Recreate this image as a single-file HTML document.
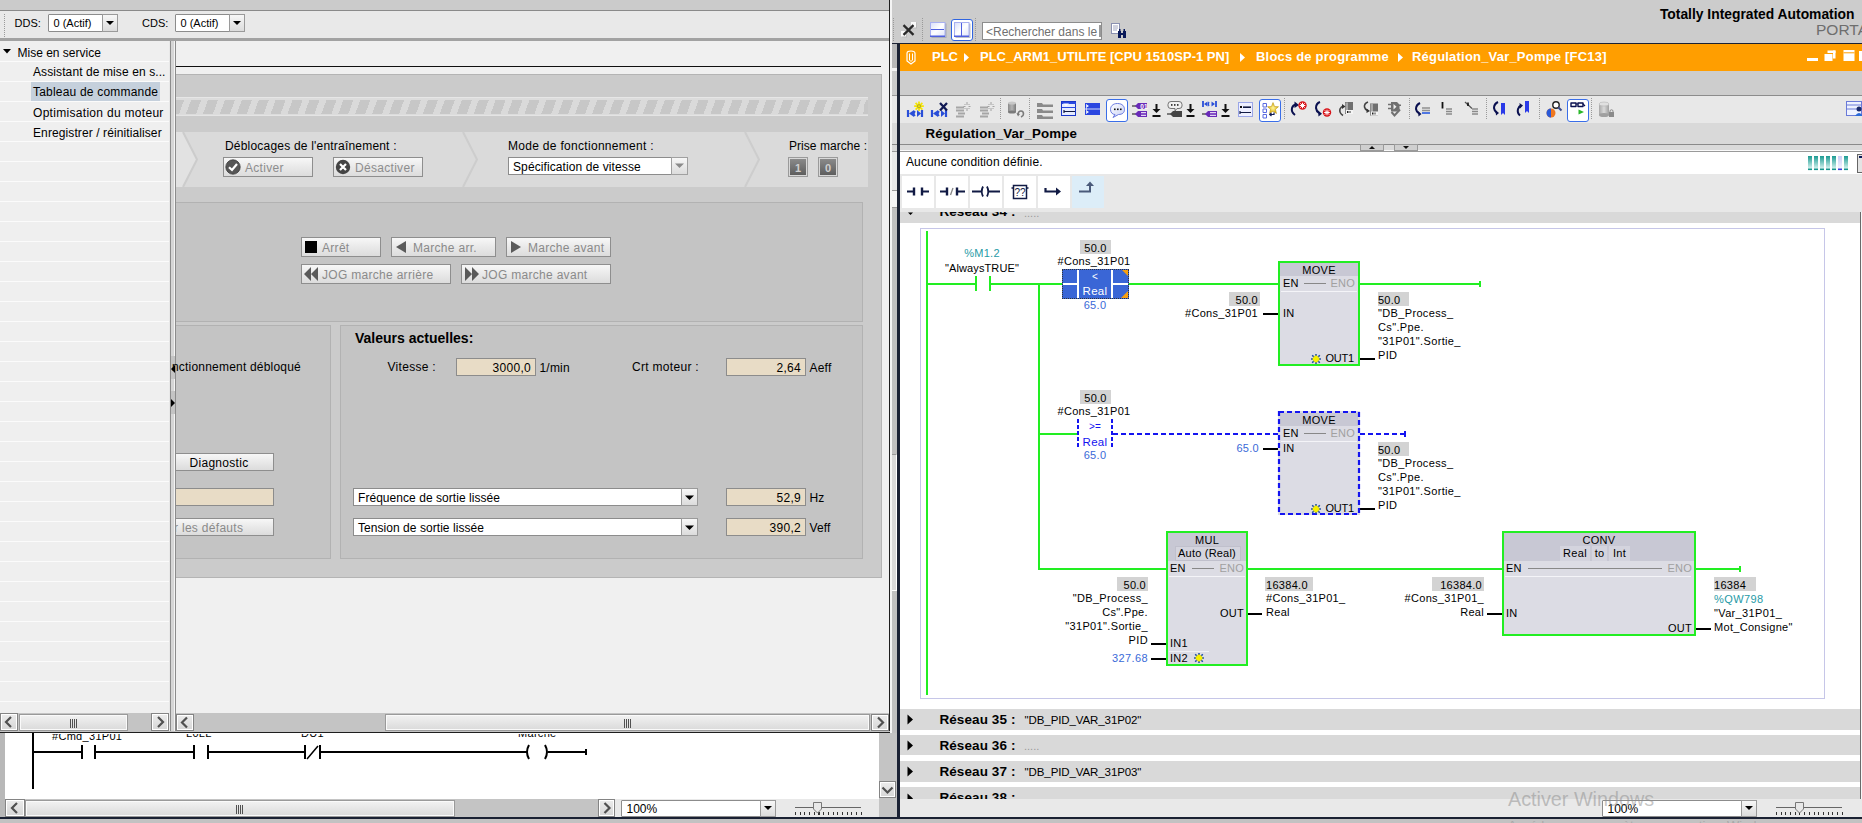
<!DOCTYPE html><html><head><meta charset="utf-8"><style>
html,body{margin:0;padding:0;}
body{width:1862px;height:823px;overflow:hidden;position:relative;background:#c4c4c4;font-family:"Liberation Sans", sans-serif;}
body div, body svg{position:absolute;} svg{overflow:visible;}
.btn{background:linear-gradient(#f7f7f7,#e9e9e9 50%,#dcdcdc);border:1px solid #8e8e8e;box-sizing:border-box;}
</style></head><body>
<div style="left:0px;top:0px;width:889px;height:10px;background:#cbcbcb;"></div>
<div style="left:0px;top:10px;width:889px;height:1px;background:#8a8a8a;"></div>
<div style="left:0px;top:11px;width:890px;height:27px;background:#e9e9e9;"></div>
<div style="left:4px;top:14px;width:1px;height:23px;background:repeating-linear-gradient(#9a9a9a 0 1px,transparent 1px 2px);"></div>
<div style="left:0px;top:38px;width:890px;height:3px;background:#a2a2a2;"></div>
<div style="top:17.49px;font-size:11px;line-height:13px;font-weight:400;color:#000;white-space:pre;left:14.5px;">DDS:</div>
<div style="left:48px;top:14px;width:70px;height:18px;background:#fff;border:1px solid #8c8c8c;box-sizing:border-box;border-radius:1px;"></div>
<div class="btn" style="left:102px;top:14px;width:16px;height:18px;border-color:#9a9a9a;"></div>
<svg style="left:105px;top:20px;" width="10" height="6" viewBox="0 0 10 6"><path d="M1 1 L9 1 L5 5 Z" fill="#000"/></svg>
<div style="top:17.49px;font-size:11px;line-height:13px;font-weight:400;color:#000;white-space:pre;left:53.5px;">0 (Actif)</div>
<div style="top:17.49px;font-size:11px;line-height:13px;font-weight:400;color:#000;white-space:pre;left:142px;">CDS:</div>
<div style="left:175px;top:14px;width:70px;height:18px;background:#fff;border:1px solid #8c8c8c;box-sizing:border-box;border-radius:1px;"></div>
<div class="btn" style="left:229px;top:14px;width:16px;height:18px;border-color:#9a9a9a;"></div>
<svg style="left:232px;top:20px;" width="10" height="6" viewBox="0 0 10 6"><path d="M1 1 L9 1 L5 5 Z" fill="#000"/></svg>
<div style="top:17.49px;font-size:11px;line-height:13px;font-weight:400;color:#000;white-space:pre;left:180.5px;">0 (Actif)</div>
<div style="left:0px;top:41px;width:169px;height:672px;background:#efefef;"></div>
<div style="left:0px;top:61px;width:169px;height:1px;background:#fbfbfb;"></div>
<div style="left:0px;top:81px;width:169px;height:1px;background:#fbfbfb;"></div>
<div style="left:0px;top:101px;width:169px;height:1px;background:#fbfbfb;"></div>
<div style="left:0px;top:121px;width:169px;height:1px;background:#fbfbfb;"></div>
<div style="left:0px;top:141px;width:169px;height:1px;background:#fbfbfb;"></div>
<div style="left:0px;top:161px;width:169px;height:1px;background:#fbfbfb;"></div>
<div style="left:0px;top:181px;width:169px;height:1px;background:#fbfbfb;"></div>
<div style="left:0px;top:201px;width:169px;height:1px;background:#fbfbfb;"></div>
<div style="left:0px;top:221px;width:169px;height:1px;background:#fbfbfb;"></div>
<div style="left:0px;top:241px;width:169px;height:1px;background:#fbfbfb;"></div>
<div style="left:0px;top:261px;width:169px;height:1px;background:#fbfbfb;"></div>
<div style="left:0px;top:281px;width:169px;height:1px;background:#fbfbfb;"></div>
<div style="left:0px;top:301px;width:169px;height:1px;background:#fbfbfb;"></div>
<div style="left:0px;top:321px;width:169px;height:1px;background:#fbfbfb;"></div>
<div style="left:0px;top:341px;width:169px;height:1px;background:#fbfbfb;"></div>
<div style="left:0px;top:361px;width:169px;height:1px;background:#fbfbfb;"></div>
<div style="left:0px;top:381px;width:169px;height:1px;background:#fbfbfb;"></div>
<div style="left:0px;top:401px;width:169px;height:1px;background:#fbfbfb;"></div>
<div style="left:0px;top:421px;width:169px;height:1px;background:#fbfbfb;"></div>
<div style="left:0px;top:441px;width:169px;height:1px;background:#fbfbfb;"></div>
<div style="left:0px;top:461px;width:169px;height:1px;background:#fbfbfb;"></div>
<div style="left:0px;top:481px;width:169px;height:1px;background:#fbfbfb;"></div>
<div style="left:0px;top:501px;width:169px;height:1px;background:#fbfbfb;"></div>
<div style="left:0px;top:521px;width:169px;height:1px;background:#fbfbfb;"></div>
<div style="left:0px;top:541px;width:169px;height:1px;background:#fbfbfb;"></div>
<div style="left:0px;top:561px;width:169px;height:1px;background:#fbfbfb;"></div>
<div style="left:0px;top:581px;width:169px;height:1px;background:#fbfbfb;"></div>
<div style="left:0px;top:601px;width:169px;height:1px;background:#fbfbfb;"></div>
<div style="left:0px;top:621px;width:169px;height:1px;background:#fbfbfb;"></div>
<div style="left:0px;top:641px;width:169px;height:1px;background:#fbfbfb;"></div>
<div style="left:0px;top:661px;width:169px;height:1px;background:#fbfbfb;"></div>
<div style="left:0px;top:681px;width:169px;height:1px;background:#fbfbfb;"></div>
<div style="left:0px;top:701px;width:169px;height:1px;background:#fbfbfb;"></div>
<svg style="left:3px;top:49px;" width="9" height="5" viewBox="0 0 9 5"><path d="M0 0 L8 0 L4 4.5 Z" fill="#000"/></svg>
<div style="top:45.64px;font-size:12px;line-height:14px;font-weight:400;color:#000;white-space:pre;left:17.5px;">Mise en service</div>
<div style="top:65.44px;font-size:12px;line-height:14px;font-weight:400;color:#000;white-space:pre;letter-spacing:0.1px;left:33px;">Assistant de mise en s...</div>
<div style="left:31px;top:82px;width:129px;height:19px;background:#c5d0dc;"></div>
<div style="top:85.44px;font-size:12px;line-height:14px;font-weight:400;color:#000;white-space:pre;letter-spacing:0.2px;left:33px;">Tableau de commande</div>
<div style="top:105.64px;font-size:12px;line-height:14px;font-weight:400;color:#000;white-space:pre;letter-spacing:0.3px;left:33px;">Optimisation du moteur</div>
<div style="top:125.64px;font-size:12px;line-height:14px;font-weight:400;color:#000;white-space:pre;letter-spacing:0.1px;left:33px;">Enregistrer / réinitialiser</div>
<div style="left:0px;top:713px;width:169px;height:18px;background:#c4c4c4;"></div>
<div style="left:0px;top:713px;width:18px;height:18px;box-sizing:border-box;border:1px solid #848484;background:linear-gradient(#ececec,#d6d6d6);box-shadow:inset 0 0 0 1px #fff;"></div>
<svg style="left:0;top:0" width="1862" height="823"><path d="M11.0 717.0 L6.0 722.0 L11.0 727.0" stroke="#505050" stroke-width="2.2" fill="none"/></svg>
<div style="left:19px;top:714px;width:109px;height:17px;box-sizing:border-box;border:1px solid #9a9a9a;background:linear-gradient(#f2f2f2,#dadada);box-shadow:inset 0 0 0 1px #fafafa;"></div>
<div style="left:69.5px;top:718.5px;width:8px;height:9px;background:repeating-linear-gradient(90deg,#505050 0 1px,transparent 1px 2px);"></div>
<div style="left:151px;top:713px;width:18px;height:18px;box-sizing:border-box;border:1px solid #848484;background:linear-gradient(#ececec,#d6d6d6);box-shadow:inset 0 0 0 1px #fff;"></div>
<svg style="left:0;top:0" width="1862" height="823"><path d="M158.0 717.0 L163.0 722.0 L158.0 727.0" stroke="#505050" stroke-width="2.2" fill="none"/></svg>
<div style="left:169px;top:41px;width:1px;height:692px;background:#e8e8e8;"></div>
<div style="left:170px;top:41px;width:1px;height:692px;background:#8c8c8c;"></div>
<div style="left:171px;top:41px;width:3px;height:692px;background:#d6d6d6;"></div>
<div style="left:174px;top:41px;width:1px;height:692px;background:#f4f4f4;"></div>
<div style="left:175px;top:41px;width:1px;height:692px;background:#8c8c8c;"></div>
<div style="left:171px;top:356px;width:4px;height:23px;background:#c4c4c4;"></div>
<svg style="left:171px;top:365px;" width="4" height="8" viewBox="0 0 4 8"><path d="M4 0 L0 4 L4 8 Z" fill="#000"/></svg>
<div style="left:171px;top:391px;width:4px;height:23px;background:#c4c4c4;"></div>
<svg style="left:171px;top:399px;" width="4" height="8" viewBox="0 0 4 8"><path d="M0 0 L4 4 L0 8 Z" fill="#000"/></svg>
<div style="left:176px;top:41px;width:713px;height:672px;background:#f0f0f0;"></div>
<div style="left:176px;top:66px;width:705px;height:1px;background:#101010;"></div>
<div style="left:176px;top:74px;width:706px;height:504px;background:#cbcbcb;border:1px solid #b4b4b4;box-sizing:border-box;border-left:none;"></div>
<div style="left:176px;top:97px;width:692px;height:19px;background:#dcdcdc;"></div>
<div style="left:176px;top:97px;width:692px;height:1px;background:#e6e6e6;"></div>
<div style="left:176px;top:115px;width:692px;height:1px;background:#e4e4e4;"></div>
<div style="left:176px;top:99.5px;width:692px;height:14px;background-position:-4px 0;background:repeating-linear-gradient(110deg,#dadada 0 2px,#c7c7c7 2px 11.4px,#dadada 11.4px 15.9px) -4px 0;"></div>
<div style="left:176px;top:132px;width:692px;height:55px;background:#dadada;"></div>
<div style="left:176px;top:132px;width:8px;height:55px;background:#e2e2e2;"></div>
<svg style="left:176px;top:132px;" width="692" height="55" viewBox="0 0 692 55"><path d="M7 0 L21 27.5 L7 55" stroke="#cccccc" stroke-width="2" fill="#e2e2e2"/><path d="M287 0 L301 27.5 L287 55" stroke="#cdcdcd" stroke-width="2" fill="none"/><path d="M569 0 L583 27.5 L569 55" stroke="#cdcdcd" stroke-width="2" fill="none"/></svg>
<div style="top:139.44px;font-size:12px;line-height:14px;font-weight:400;color:#000;white-space:pre;letter-spacing:0.2px;left:225px;">Déblocages de l&#39;entraînement :</div>
<div class="btn" style="left:223px;top:157px;width:90px;height:20px;"></div>
<svg style="left:225px;top:159px;" width="16" height="16" viewBox="0 0 16 16"><circle cx="8" cy="8" r="7.2" fill="#555"/><circle cx="8" cy="8" r="7.2" fill="none" stroke="#3a3a3a" stroke-width="0.8"/><path d="M4 8.2 L7 11 L12 5" stroke="#fff" stroke-width="2.2" fill="none"/></svg>
<div style="top:161.14px;font-size:12px;line-height:14px;font-weight:400;color:#8d8d8d;white-space:pre;letter-spacing:0.3px;left:245px;">Activer</div>
<div class="btn" style="left:333px;top:157px;width:90px;height:20px;"></div>
<svg style="left:335px;top:159px;" width="16" height="16" viewBox="0 0 16 16"><circle cx="8" cy="8" r="7.2" fill="#444"/><path d="M5 5 L11 11 M11 5 L5 11" stroke="#fff" stroke-width="2.2"/></svg>
<div style="top:161.14px;font-size:12px;line-height:14px;font-weight:400;color:#8d8d8d;white-space:pre;letter-spacing:0.3px;left:355px;">Désactiver</div>
<div style="top:139.44px;font-size:12px;line-height:14px;font-weight:400;color:#000;white-space:pre;letter-spacing:0.3px;left:508px;">Mode de fonctionnement :</div>
<div style="left:508px;top:157px;width:180px;height:18px;background:#fff;border:1px solid #8c8c8c;box-sizing:border-box;"></div>
<div class="btn" style="left:671px;top:157px;width:17px;height:18px;border-color:#a0a0a0;"></div>
<svg style="left:674px;top:163px;" width="11" height="6" viewBox="0 0 11 6"><path d="M1 0.5 L10 0.5 L5.5 5 Z" fill="#8a8a8a"/></svg>
<div style="top:159.64px;font-size:12px;line-height:14px;font-weight:400;color:#000;white-space:pre;letter-spacing:0.1px;left:513px;">Spécification de vitesse</div>
<div style="top:139.44px;font-size:12px;line-height:14px;font-weight:400;color:#000;white-space:pre;letter-spacing:0.05px;left:789px;">Prise marche :</div>
<div style="left:788px;top:157px;width:20px;height:20px;background:#d8d8d8;border:1px solid #9a9a9a;box-sizing:border-box;"></div>
<div style="left:790px;top:159px;width:16px;height:16px;background:linear-gradient(#8a8a8a,#5e5e5e);"></div>
<div style="top:161.99px;font-size:11px;line-height:13px;font-weight:700;color:#cfcfcf;white-space:pre;left:498px;width:600px;text-align:center;">1</div>
<div style="left:818px;top:157px;width:20px;height:20px;background:#d8d8d8;border:1px solid #9a9a9a;box-sizing:border-box;"></div>
<div style="left:820px;top:159px;width:16px;height:16px;background:linear-gradient(#8a8a8a,#5e5e5e);"></div>
<div style="top:161.99px;font-size:11px;line-height:13px;font-weight:700;color:#cfcfcf;white-space:pre;left:528px;width:600px;text-align:center;">0</div>
<div style="left:176px;top:202px;width:687px;height:120px;background:#c4c4c4;border:1px solid #b2b2b2;box-sizing:border-box;border-left:none;"></div>
<div class="btn" style="left:301px;top:237px;width:80px;height:20px;"></div>
<div style="left:305px;top:241px;width:12px;height:12px;background:#000;"></div>
<div style="top:241.14px;font-size:12px;line-height:14px;font-weight:400;color:#8a8a8a;white-space:pre;letter-spacing:0.3px;left:322px;">Arrêt</div>
<div class="btn" style="left:391px;top:237px;width:105px;height:20px;"></div>
<svg style="left:394px;top:240px" width="14" height="14"><path d="M12 1 L2 7 L12 13 Z" fill="#5a5a5a"/></svg>
<div style="top:241.14px;font-size:12px;line-height:14px;font-weight:400;color:#8a8a8a;white-space:pre;letter-spacing:0.3px;left:413px;">Marche arr.</div>
<div class="btn" style="left:506px;top:237px;width:105px;height:20px;"></div>
<svg style="left:509px;top:240px" width="14" height="14"><path d="M2 1 L12 7 L2 13 Z" fill="#5a5a5a"/></svg>
<div style="top:241.14px;font-size:12px;line-height:14px;font-weight:400;color:#8a8a8a;white-space:pre;letter-spacing:0.3px;left:528px;">Marche avant</div>
<div class="btn" style="left:301px;top:264px;width:150px;height:20px;"></div>
<svg style="left:303px;top:266px" width="17" height="16"><path d="M8 1 L1 8 L8 15 Z M15 1 L8 8 L15 15 Z" fill="#5a5a5a"/></svg>
<div style="top:268.14px;font-size:12px;line-height:14px;font-weight:400;color:#8a8a8a;white-space:pre;letter-spacing:0.3px;left:322px;">JOG marche arrière</div>
<div class="btn" style="left:461px;top:264px;width:150px;height:20px;"></div>
<svg style="left:463px;top:266px" width="17" height="16"><path d="M2 1 L9 8 L2 15 Z M9 1 L16 8 L9 15 Z" fill="#5a5a5a"/></svg>
<div style="top:268.14px;font-size:12px;line-height:14px;font-weight:400;color:#8a8a8a;white-space:pre;letter-spacing:0.3px;left:482px;">JOG marche avant</div>
<div style="left:176px;top:325px;width:155px;height:234px;background:#c4c4c4;border:1px solid #b2b2b2;box-sizing:border-box;border-left:none;"></div>
<div style="left:340px;top:325px;width:523px;height:234px;background:#c4c4c4;border:1px solid #b2b2b2;box-sizing:border-box;"></div>
<div style="top:360.14px;font-size:12px;line-height:14px;font-weight:400;color:#000;white-space:pre;letter-spacing:0.2px;left:172px;">nctionnement débloqué</div>
<div class="btn" style="left:176px;top:453px;width:98px;height:18px;border-left:none;"></div>
<div style="top:455.64px;font-size:12px;line-height:14px;font-weight:400;color:#000;white-space:pre;letter-spacing:0.3px;left:-81px;width:600px;text-align:center;">Diagnostic</div>
<div style="left:176px;top:488px;width:98px;height:18px;background:#e8dcc6;border:1px solid #8c8c8c;box-sizing:border-box;border-left:none;"></div>
<div class="btn" style="left:176px;top:518px;width:98px;height:18px;border-left:none;"></div>
<div style="left:176px;top:518px;width:98px;height:18px;overflow:hidden;">
<div style="top:2.64px;font-size:12px;line-height:14px;font-weight:400;color:#8a8a8a;white-space:pre;letter-spacing:0.3px;left:-2px;">r les défauts</div>
</div>
<div style="top:330.15px;font-size:14px;line-height:17px;font-weight:700;color:#000;white-space:pre;left:355px;">Valeurs actuelles:</div>
<div style="top:360.14px;font-size:12px;line-height:14px;font-weight:400;color:#000;white-space:pre;letter-spacing:0.3px;left:-164px;width:600px;text-align:right;">Vitesse :</div>
<div style="left:456px;top:358px;width:80px;height:18px;background:#e8dcc6;border:1px solid #8c8c8c;box-sizing:border-box;"></div>
<div style="top:360.64px;font-size:12px;line-height:14px;font-weight:400;color:#000;white-space:pre;letter-spacing:0.3px;left:-69px;width:600px;text-align:right;">3000,0</div>
<div style="top:360.64px;font-size:12px;line-height:14px;font-weight:400;color:#000;white-space:pre;letter-spacing:0.2px;left:539.5px;">1/min</div>
<div style="top:360.14px;font-size:12px;line-height:14px;font-weight:400;color:#000;white-space:pre;letter-spacing:0.3px;left:99px;width:600px;text-align:right;">Crt moteur :</div>
<div style="left:726px;top:358px;width:80px;height:18px;background:#e8dcc6;border:1px solid #8c8c8c;box-sizing:border-box;"></div>
<div style="top:360.64px;font-size:12px;line-height:14px;font-weight:400;color:#000;white-space:pre;letter-spacing:0.3px;left:201px;width:600px;text-align:right;">2,64</div>
<div style="top:360.64px;font-size:12px;line-height:14px;font-weight:400;color:#000;white-space:pre;letter-spacing:0.2px;left:809.5px;">Aeff</div>
<div style="left:353px;top:488px;width:345px;height:18px;background:#fff;border:1px solid #8c8c8c;box-sizing:border-box;"></div>
<div class="btn" style="left:681px;top:488px;width:17px;height:18px;border-color:#9a9a9a;"></div>
<svg style="left:684px;top:495px;" width="11" height="6" viewBox="0 0 11 6"><path d="M1 0.5 L10 0.5 L5.5 5 Z" fill="#000"/></svg>
<div style="top:490.64px;font-size:12px;line-height:14px;font-weight:400;color:#000;white-space:pre;letter-spacing:0.05px;left:358px;">Fréquence de sortie lissée</div>
<div style="left:726px;top:488px;width:80px;height:18px;background:#e8dcc6;border:1px solid #8c8c8c;box-sizing:border-box;"></div>
<div style="top:490.64px;font-size:12px;line-height:14px;font-weight:400;color:#000;white-space:pre;letter-spacing:0.3px;left:201px;width:600px;text-align:right;">52,9</div>
<div style="top:490.64px;font-size:12px;line-height:14px;font-weight:400;color:#000;white-space:pre;letter-spacing:0.1px;left:809.5px;">Hz</div>
<div style="left:353px;top:518px;width:345px;height:18px;background:#fff;border:1px solid #8c8c8c;box-sizing:border-box;"></div>
<div class="btn" style="left:681px;top:518px;width:17px;height:18px;border-color:#9a9a9a;"></div>
<svg style="left:684px;top:525px;" width="11" height="6" viewBox="0 0 11 6"><path d="M1 0.5 L10 0.5 L5.5 5 Z" fill="#000"/></svg>
<div style="top:520.64px;font-size:12px;line-height:14px;font-weight:400;color:#000;white-space:pre;letter-spacing:0.05px;left:358px;">Tension de sortie lissée</div>
<div style="left:726px;top:518px;width:80px;height:18px;background:#e8dcc6;border:1px solid #8c8c8c;box-sizing:border-box;"></div>
<div style="top:520.64px;font-size:12px;line-height:14px;font-weight:400;color:#000;white-space:pre;letter-spacing:0.3px;left:201px;width:600px;text-align:right;">390,2</div>
<div style="top:520.64px;font-size:12px;line-height:14px;font-weight:400;color:#000;white-space:pre;letter-spacing:0.1px;left:809.5px;">Veff</div>
<div style="left:176px;top:713px;width:713px;height:18px;background:#c4c4c4;"></div>
<div style="left:176px;top:714px;width:18px;height:17px;box-sizing:border-box;border:1px solid #848484;background:linear-gradient(#ececec,#d6d6d6);box-shadow:inset 0 0 0 1px #fff;"></div>
<svg style="left:0;top:0" width="1862" height="823"><path d="M187.0 717.5 L182.0 722.5 L187.0 727.5" stroke="#505050" stroke-width="2.2" fill="none"/></svg>
<div style="left:385px;top:714px;width:485px;height:17px;box-sizing:border-box;border:1px solid #9a9a9a;background:linear-gradient(#f2f2f2,#dadada);box-shadow:inset 0 0 0 1px #fafafa;"></div>
<div style="left:623.5px;top:718.5px;width:8px;height:9px;background:repeating-linear-gradient(90deg,#505050 0 1px,transparent 1px 2px);"></div>
<div style="left:871px;top:714px;width:18px;height:17px;box-sizing:border-box;border:1px solid #848484;background:linear-gradient(#ececec,#d6d6d6);box-shadow:inset 0 0 0 1px #fff;"></div>
<svg style="left:0;top:0" width="1862" height="823"><path d="M878.0 717.5 L883.0 722.5 L878.0 727.5" stroke="#505050" stroke-width="2.2" fill="none"/></svg>
<div style="left:889px;top:0px;width:1px;height:733px;background:#1e1e1e;"></div>
<div style="left:890px;top:0px;width:2px;height:733px;background:#f4f4f4;"></div>
<div style="left:0px;top:731px;width:890px;height:1px;background:#c4c4c4;"></div>
<div style="left:0px;top:732px;width:890px;height:1px;background:#1e1e1e;"></div>
<div style="left:0px;top:733px;width:897px;height:84px;background:#ffffff;"></div>
<div style="left:0px;top:733px;width:5px;height:84px;background:#b8b8b8;"></div>
<div style="left:32px;top:733px;width:2px;height:56px;background:#000;"></div>
<svg style="left:0;top:733px" width="880" height="66"><path d="M34 19 H82 M96 19 H194 M208 19 H305 M321 19 H527" stroke="#000" stroke-width="2" fill="none"/><path d="M82 12 V26 M95 12 V26 M194 12 V26 M208 12 V26 M305 12 V26 M320 12 V26" stroke="#000" stroke-width="2" fill="none"/><path d="M307 26 L318 13" stroke="#000" stroke-width="1.5"/><path d="M529 12 Q525 19 529 26 M545 12 Q549 19 545 26" stroke="#000" stroke-width="2" fill="none"/><path d="M548 19 H586 M586 16 V22" stroke="#000" stroke-width="2" fill="none"/></svg>
<div style="left:0;top:734px;width:880px;height:20px;overflow:hidden;">
<div style="top:-4.01px;font-size:11px;line-height:13px;font-weight:400;color:#000;white-space:pre;letter-spacing:0.3px;left:52px;">#Cmd_31P01</div>
<div style="top:-7.01px;font-size:11px;line-height:13px;font-weight:400;color:#000;white-space:pre;letter-spacing:0.3px;left:186px;">L0LL</div>
<div style="top:-7.01px;font-size:11px;line-height:13px;font-weight:400;color:#000;white-space:pre;letter-spacing:0.3px;left:301px;">DU1</div>
<div style="top:-7.01px;font-size:11px;line-height:13px;font-weight:400;color:#000;white-space:pre;letter-spacing:0.3px;left:518px;">Marche</div>
</div>
<div style="left:879px;top:733px;width:18px;height:84px;background:#c4c4c4;"></div>
<div style="left:879px;top:781px;width:17px;height:17px;box-sizing:border-box;border:1px solid #848484;background:linear-gradient(#ececec,#d6d6d6);box-shadow:inset 0 0 0 1px #fff;"></div>
<svg style="left:0;top:0" width="1862" height="823"><path d="M882.5 787.5 L887.5 792.5 L892.5 787.5" stroke="#505050" stroke-width="2.2" fill="none"/></svg>
<div style="left:5px;top:799px;width:874px;height:18px;background:#c4c4c4;"></div>
<div style="left:5px;top:799px;width:20px;height:18px;box-sizing:border-box;border:1px solid #848484;background:linear-gradient(#ececec,#d6d6d6);box-shadow:inset 0 0 0 1px #fff;"></div>
<svg style="left:0;top:0" width="1862" height="823"><path d="M17.0 803.0 L12.0 808.0 L17.0 813.0" stroke="#505050" stroke-width="2.2" fill="none"/></svg>
<div style="left:25px;top:800px;width:430px;height:17px;box-sizing:border-box;border:1px solid #9a9a9a;background:linear-gradient(#f2f2f2,#dadada);box-shadow:inset 0 0 0 1px #fafafa;"></div>
<div style="left:236.0px;top:804.5px;width:8px;height:9px;background:repeating-linear-gradient(90deg,#505050 0 1px,transparent 1px 2px);"></div>
<div style="left:598px;top:799px;width:17px;height:18px;box-sizing:border-box;border:1px solid #848484;background:linear-gradient(#ececec,#d6d6d6);box-shadow:inset 0 0 0 1px #fff;"></div>
<svg style="left:0;top:0" width="1862" height="823"><path d="M604.5 803.0 L609.5 808.0 L604.5 813.0" stroke="#505050" stroke-width="2.2" fill="none"/></svg>
<div style="left:615px;top:799px;width:264px;height:18px;background:#e9e9e9;"></div>
<div style="left:621px;top:800px;width:155px;height:17px;background:#fff;border:1px solid #8c8c8c;box-sizing:border-box;border-radius:1px;"></div>
<div class="btn" style="left:760px;top:800px;width:16px;height:17px;border-color:#9a9a9a;"></div>
<svg style="left:763px;top:805px;" width="10" height="6" viewBox="0 0 10 6"><path d="M1 1 L9 1 L5 5 Z" fill="#000"/></svg>
<div style="top:802.14px;font-size:12px;line-height:14px;font-weight:400;color:#000;white-space:pre;left:626.5px;">100%</div>
<div style="left:795px;top:807px;width:66px;height:1px;background:#666;"></div>
<div style="left:795px;top:812px;width:67px;height:3px;background:repeating-linear-gradient(90deg,#333 0 1px,transparent 1px 4.7px);"></div>
<svg style="left:813px;top:802px;" width="9" height="12" viewBox="0 0 9 12"><path d="M0.5 0.5 H8.5 V7 L4.5 11 L0.5 7 Z" fill="#e8e8e8" stroke="#777"/></svg>
<div style="left:892px;top:0px;width:970px;height:43px;background:#cccccc;"></div>
<div style="left:892px;top:43px;width:970px;height:1px;background:#1a2133;"></div>
<div style="left:892px;top:44px;width:5px;height:689px;background:#c0c0c0;"></div>
<div style="left:892px;top:44px;width:5px;height:24px;background:#b8b8b8;"></div>
<div style="left:892px;top:68px;width:5px;height:3px;background:#f4f4f4;"></div>
<div style="left:892px;top:71px;width:5px;height:24px;background:#cbcbcb;"></div>
<div style="left:892px;top:95px;width:5px;height:1px;background:#999;"></div>
<div style="left:892px;top:96px;width:5px;height:27px;background:#e8e8e8;"></div>
<div style="left:892px;top:123px;width:5px;height:21px;background:#d9d9d9;"></div>
<div style="left:892px;top:144px;width:5px;height:1px;background:#888;"></div>
<div style="left:892px;top:145px;width:5px;height:6px;background:#d9d9d9;"></div>
<div style="left:892px;top:151px;width:5px;height:1px;background:#999;"></div>
<div style="left:892px;top:152px;width:5px;height:38px;background:#e8e8e8;"></div>
<div style="left:892px;top:190px;width:5px;height:1px;background:#999;"></div>
<div style="left:892px;top:191px;width:5px;height:16px;background:#f4f4f4;"></div>
<div style="left:892px;top:207px;width:5px;height:1px;background:#999;"></div>
<div style="left:892px;top:454px;width:5px;height:137px;background:#d8d8d8;border:1px solid #fff;box-sizing:border-box;border-left:none;border-top:1px solid #999;"></div>
<div style="left:897px;top:44px;width:3px;height:775px;background:#1a2133;"></div>
<div style="left:893px;top:18px;width:1px;height:23px;background:repeating-linear-gradient(#9a9a9a 0 1px,transparent 1px 2px);"></div>
<div style="left:922px;top:18px;width:1px;height:23px;background:repeating-linear-gradient(#9a9a9a 0 1px,transparent 1px 2px);"></div>
<div style="left:975px;top:18px;width:1px;height:23px;background:repeating-linear-gradient(#9a9a9a 0 1px,transparent 1px 2px);"></div>
<svg style="left:900px;top:20px;" width="20" height="20" viewBox="0 0 20 20"><rect x="12" y="2.5" width="5" height="6" fill="#aaa" opacity="0.5"/><rect x="11" y="2" width="5" height="5.5" fill="#fafafa"/><rect x="2" y="12" width="5" height="5.5" fill="#aaa" opacity="0.5"/><rect x="1" y="11" width="5" height="5.5" fill="#fafafa"/><path d="M3.5 5.2 L13.5 14.8 M13.5 5.2 L3.5 14.8" stroke="#2a2a2a" stroke-width="2.3"/></svg>
<svg style="left:930px;top:22px;" width="17" height="17" viewBox="0 0 17 17"><defs><linearGradient id="sg" x1="0" y1="0" x2="1" y2="1"><stop offset="0" stop-color="#d8def8"/><stop offset="0.5" stop-color="#ffffff"/><stop offset="1" stop-color="#dfe4fa"/></linearGradient></defs><rect x="1.5" y="1.5" width="15" height="14.5" fill="#9098a8" opacity="0.6"/><rect x="0.5" y="0.5" width="14.5" height="14" fill="url(#sg)" stroke="#a8b0f0" stroke-width="1"/><rect x="0" y="13.5" width="15" height="1.5" fill="#5060e0"/><path d="M1 7.5 H14" stroke="#5060e0" stroke-width="1"/></svg>
<div style="left:951px;top:19px;width:22px;height:22px;background:#ffffff;border:1.5px solid #2f64e0;box-sizing:border-box;border-radius:3px;"></div>
<svg style="left:954px;top:22px;" width="17" height="17" viewBox="0 0 17 17"><defs><linearGradient id="sg" x1="0" y1="0" x2="1" y2="1"><stop offset="0" stop-color="#d8def8"/><stop offset="0.5" stop-color="#ffffff"/><stop offset="1" stop-color="#dfe4fa"/></linearGradient></defs><rect x="1.5" y="1.5" width="15" height="14.5" fill="#9098a8" opacity="0.6"/><rect x="0.5" y="0.5" width="14.5" height="14" fill="url(#sg)" stroke="#a8b0f0" stroke-width="1"/><rect x="0" y="13.5" width="15" height="1.5" fill="#5060e0"/><path d="M7.5 1 V14" stroke="#5060e0" stroke-width="1"/></svg>
<div style="left:982px;top:22px;width:120px;height:18px;background:#fff;border:1px solid #8c8c8c;box-sizing:border-box;"></div>
<div style="top:24.64px;font-size:12px;line-height:14px;font-weight:400;color:#707070;white-space:pre;left:986px;">&lt;Rechercher dans le</div>
<div style="left:1099px;top:25px;width:2px;height:12px;background:#999;"></div>
<svg style="left:1110px;top:22px;" width="18" height="17" viewBox="0 0 18 17"><rect x="1.5" y="1.5" width="8" height="10" fill="#fff" stroke="#8a90b0"/><path d="M3 4H8M3 6H8M3 8H7" stroke="#8a90b0" stroke-width="0.8"/><path d="M8 9 h3 v7 h-3z M13 9 h3 v7 h-3z" fill="#0a1a5a"/><path d="M9 7 h1.5 v2 h-1.5z M13.5 7 h1.5 v2 h-1.5z" fill="#0a1a5a"/><rect x="10" y="11" width="4" height="2" fill="#0a1a5a"/></svg>
<div style="top:6.30px;font-size:13.85px;line-height:17px;font-weight:700;color:#000;white-space:pre;left:1254.5px;width:600px;text-align:right;">Totally Integrated Automation</div>
<div style="top:20.23px;font-size:15.5px;line-height:19px;font-weight:400;color:#6e6e6e;white-space:pre;left:1816px;">PORTA</div>
<div style="left:900px;top:44px;width:962px;height:27px;background:#ff9e00;"></div>
<svg style="left:905px;top:50px;" width="13" height="15" viewBox="0 0 13 15"><path d="M2 11 V3.5 Q2 1 6 1 Q10 1 10 3.5 V11 L6 14 Z" stroke="#fff" stroke-width="1.2" fill="none"/><path d="M4.5 3.5 V10 L6 11.5 L7.5 10 V3.5" stroke="#fff" stroke-width="1" fill="none"/></svg>
<div style="top:49.30px;font-size:13px;line-height:16px;font-weight:700;color:#fff;white-space:pre;left:932px;">PLC</div>
<svg style="left:964px;top:53px;" width="6" height="9" viewBox="0 0 6 9"><path d="M0 0 L5 4.5 L0 9 Z" fill="#fff"/></svg>
<div style="top:49.30px;font-size:13px;line-height:16px;font-weight:700;color:#fff;white-space:pre;left:980px;">PLC_ARM1_UTILITE [CPU 1510SP-1 PN]</div>
<svg style="left:1240px;top:53px;" width="6" height="9" viewBox="0 0 6 9"><path d="M0 0 L5 4.5 L0 9 Z" fill="#fff"/></svg>
<div style="top:49.30px;font-size:13px;line-height:16px;font-weight:700;color:#fff;white-space:pre;letter-spacing:0.2px;left:1256px;">Blocs de programme</div>
<svg style="left:1398px;top:53px;" width="6" height="9" viewBox="0 0 6 9"><path d="M0 0 L5 4.5 L0 9 Z" fill="#fff"/></svg>
<div style="top:49.30px;font-size:13px;line-height:16px;font-weight:700;color:#fff;white-space:pre;letter-spacing:0.2px;left:1412px;">Régulation_Var_Pompe [FC13]</div>
<div style="left:1807px;top:58px;width:11px;height:3px;background:#fff;"></div>
<svg style="left:1824px;top:50px;" width="12" height="11" viewBox="0 0 12 11"><rect x="3.5" y="0.5" width="8" height="2.5" fill="#fff"/><rect x="9" y="0.5" width="2.5" height="8" fill="#fff"/><rect x="0.5" y="4" width="8" height="7" fill="#fff"/></svg>
<svg style="left:1843px;top:50px;" width="12" height="11" viewBox="0 0 12 11"><rect x="0.5" y="0" width="11" height="11" fill="#fff"/><rect x="0.5" y="2.3" width="11" height="1" fill="#ff9e00"/></svg>
<div style="left:1859px;top:51px;width:3px;height:10px;background:#fff;"></div>
<div style="left:900px;top:71px;width:962px;height:24px;background:#cdcdcd;"></div>
<div style="left:900px;top:95px;width:962px;height:1px;background:#8c8c8c;"></div>
<div style="left:900px;top:96px;width:962px;height:27px;background:#e8e8e8;"></div>
<svg style="left:907px;top:100px;" width="17" height="20" viewBox="0 0 17 20"><path d="M1 10 V17" stroke="#2a4fd8" stroke-width="2.2"/><path d="M2 13.5 L7 10 V17 Z" fill="#2a4fd8"/><path d="M8 11 Q6 13.5 8 16" stroke="#2a4fd8" stroke-width="1.6" fill="none"/><path d="M15 10 V17" stroke="#2a4fd8" stroke-width="2.2"/><path d="M14 13.5 L10 10 V17 Z" fill="#2a4fd8"/><path d="M12 1.5 V11 M7.2 6.2 H16.8 M8.6 2.8 L15.4 9.6 M15.4 2.8 L8.6 9.6" stroke="#f4e400" stroke-width="1.7"/><circle cx="12" cy="6.2" r="1.6" fill="#f4e400" stroke="#556" stroke-width="0.4"/></svg>
<svg style="left:931px;top:100px;" width="17" height="20" viewBox="0 0 17 20"><path d="M1 10 V17" stroke="#2a4fd8" stroke-width="2.2"/><path d="M2 13.5 L7 10 V17 Z" fill="#2a4fd8"/><path d="M8 11 Q6 13.5 8 16" stroke="#2a4fd8" stroke-width="1.6" fill="none"/><path d="M15 10 V17" stroke="#2a4fd8" stroke-width="2.2"/><path d="M14 13.5 L10 10 V17 Z" fill="#2a4fd8"/><path d="M9 3 L16 10.5 M16 3 L9 10.5" stroke="#111a55" stroke-width="2.3"/></svg>
<svg style="left:955px;top:100px;" width="17" height="20" viewBox="0 0 17 20"><path d="M1 7.5 H9 M1 10.5 H9 M3 13.5 H10 M1 16.5 H9" stroke="#a6a6a6" stroke-width="2"/><path d="M12 2 V5 M12 8 V11 M8.5 6.5 H10.5 M13.5 6.5 H15.5 M9.5 4 L10.5 5 M14.5 4 L13.5 5 M9.5 9 L10.5 8 M14.5 9 L13.5 8" stroke="#9a9a9a" stroke-width="0.9"/></svg>
<svg style="left:979px;top:100px;" width="17" height="20" viewBox="0 0 17 20"><path d="M1 7.5 H9 M1 10.5 H9 M3 13.5 H10 M1 16.5 H9" stroke="#a6a6a6" stroke-width="2"/><path d="M12 2 V5 M12 8 V11 M8.5 6.5 H10.5 M13.5 6.5 H15.5 M9.5 4 L10.5 5 M14.5 4 L13.5 5 M9.5 9 L10.5 8 M14.5 9 L13.5 8" stroke="#9a9a9a" stroke-width="0.9"/></svg>
<div style="left:1000px;top:98px;width:1px;height:22px;background:repeating-linear-gradient(#9a9a9a 0 1px,transparent 1px 2px);"></div>
<svg style="left:1008px;top:100px;" width="17" height="20" viewBox="0 0 17 20"><defs><linearGradient id="cyl" x1="0" x2="1"><stop offset="0" stop-color="#8a8a8a"/><stop offset="0.5" stop-color="#b4b4b4"/><stop offset="1" stop-color="#7a7a7a"/></linearGradient></defs><rect x="0" y="3" width="8" height="9" fill="url(#cyl)"/><ellipse cx="4" cy="3" rx="4" ry="1.6" fill="#c8c8c8"/><ellipse cx="4" cy="12" rx="4" ry="1.6" fill="#7a7a7a"/><path d="M10 15 Q10 11 13 11 Q15.5 11 15.5 14 Q15.5 16 13 17" stroke="#7a7a7a" stroke-width="1.6" fill="none"/><path d="M8.5 13 L10 16.5 L12 14 Z" fill="#7a7a7a"/></svg>
<div style="left:1029px;top:98px;width:1px;height:22px;background:repeating-linear-gradient(#9a9a9a 0 1px,transparent 1px 2px);"></div>
<svg style="left:1037px;top:100px;" width="17" height="20" viewBox="0 0 17 20"><path d="M0 3 H5 L6 4.5 H16 V7 H0 Z M0 9 H5 L6 10.5 H16 V13 H0 Z M0 15 H5 L6 16.5 H16 V19 H0 Z" fill="#8a8a8a"/></svg>
<svg style="left:1061px;top:101px;" width="16" height="16" viewBox="0 0 16 16"><rect x="0.5" y="0.5" width="14" height="14" fill="#e6ecff" stroke="#1a36c8"/><rect x="1" y="1" width="14" height="2" fill="#2a4ae0"/><rect x="1" y="6" width="14" height="1" fill="#2a4ae0"/><path d="M2 2.5 L5 5 L8 2.5 Z" fill="#fff"/><path d="M3 9 V12 M3 10.5 H14" stroke="#111a44" stroke-width="1.2"/></svg>
<svg style="left:1085px;top:103px;" width="16" height="13" viewBox="0 0 16 13"><rect x="0" y="0" width="15" height="12" fill="#2a46e0"/><path d="M0 6 H15" stroke="#fff" stroke-width="0.8"/><path d="M1.5 1 V11" stroke="#fff" stroke-width="0.6"/><path d="M1.5 1.5 L4 3 L1.5 4.5 Z M1.5 7.5 L4 9 L1.5 10.5 Z" fill="#fff"/></svg>
<div style="left:1106px;top:99px;width:22px;height:23px;background:#ffffff;border:1px solid #3a6ee8;box-sizing:border-box;border-radius:3px;"></div>
<svg style="left:1109px;top:102px;" width="17" height="17" viewBox="0 0 17 17"><defs><linearGradient id="bub" x1="0" y1="0" x2="1" y2="1"><stop offset="0" stop-color="#fff"/><stop offset="1" stop-color="#c8d0f4"/></linearGradient></defs><path d="M8.5 1.5 C3.5 1.5 1.5 4.5 1.5 7.5 C1.5 10.5 3.5 12.5 6 12.5 L4 15.5 L9.5 12.5 C13.5 12.5 15.5 10.5 15.5 7.5 C15.5 4.5 13.5 1.5 8.5 1.5 Z" fill="url(#bub)" stroke="#6a7ae0" stroke-width="1"/><rect x="5" y="6.5" width="1.6" height="1.6" fill="#111"/><rect x="8" y="6.5" width="1.6" height="1.6" fill="#111"/><rect x="11" y="6.5" width="1.6" height="1.6" fill="#111"/></svg>
<svg style="left:1132px;top:101px;" width="16" height="18" viewBox="0 0 16 18"><path d="M0 5 H4 M0 13 H4" stroke="#111" stroke-width="1"/><path d="M3 5 L6 2 H15 V8 H6 Z" fill="#6a2ab8"/><path d="M3 13 L6 10 H15 V16 H6 Z" fill="#6a2ab8"/><path d="M9 11.7 H14 M9 14.3 H14" stroke="#fff" stroke-width="1"/><text x="8.3" y="7.6" font-size="6.5" font-weight="700" font-family="Liberation Sans" fill="#fff">01</text></svg>
<svg style="left:1152px;top:104px;" width="9" height="14" viewBox="0 0 9 14"><path d="M4.5 0 V6" stroke="#111" stroke-width="2"/><path d="M0.5 5 H8.5 L4.5 9 Z" fill="#111"/><path d="M0.5 12 H8.5" stroke="#111" stroke-width="2"/></svg>
<svg style="left:1167px;top:101px;" width="17" height="18" viewBox="0 0 17 18"><path d="M4 0.5 H12 Q15 0.5 15 3.5 V5 Q15 7.5 12 7.5 H10 L8 10 V7.5 H4 Q1 7.5 1 5 V3.5 Q1 0.5 4 0.5 Z" fill="#f0f0f0" stroke="#666" stroke-width="0.9"/><rect x="4" y="3.2" width="1.5" height="1.5" fill="#111"/><rect x="7" y="3.2" width="1.5" height="1.5" fill="#111"/><rect x="10" y="3.2" width="1.5" height="1.5" fill="#111"/><path d="M0 13 H4" stroke="#111" stroke-width="1"/><path d="M3 13 L6 10 H15 V16 H6 Z" fill="#444"/></svg>
<svg style="left:1186px;top:104px;" width="9" height="14" viewBox="0 0 9 14"><path d="M4.5 0 V6" stroke="#111" stroke-width="2"/><path d="M0.5 5 H8.5 L4.5 9 Z" fill="#111"/><path d="M0.5 12 H8.5" stroke="#111" stroke-width="2"/></svg>
<svg style="left:1202px;top:100px;" width="16" height="20" viewBox="0 0 16 20"><path d="M1 1 V7" stroke="#2a4fd8" stroke-width="1.8"/><path d="M2 4 L5.5 1.5 V6.5 Z" fill="#2a4fd8"/><path d="M7 2 Q5.5 4 7 6" stroke="#2a4fd8" stroke-width="1.3" fill="none"/><path d="M14 1 V7" stroke="#2a4fd8" stroke-width="1.8"/><path d="M13 4 L9.5 1.5 V6.5 Z" fill="#2a4fd8"/><path d="M0 14 H4" stroke="#111" stroke-width="1"/><path d="M3 14 L6 11 H15 V17 H6 Z" fill="#6a2ab8"/><path d="M8 12.7 H14 M8 15.3 H14" stroke="#fff" stroke-width="1"/></svg>
<svg style="left:1221px;top:104px;" width="9" height="14" viewBox="0 0 9 14"><path d="M4.5 0 V6" stroke="#111" stroke-width="2"/><path d="M0.5 5 H8.5 L4.5 9 Z" fill="#111"/><path d="M0.5 12 H8.5" stroke="#111" stroke-width="2"/></svg>
<svg style="left:1238px;top:102px;" width="15" height="16" viewBox="0 0 15 16"><rect x="0.5" y="0.5" width="14" height="14" fill="#eef0ff" stroke="#9aa6e8"/><rect x="2" y="4" width="2" height="2" fill="#111"/><path d="M5 5.2 H13" stroke="#111a44" stroke-width="1.6"/><path d="M2 9 V12 M2 10.5 H13" stroke="#111a44" stroke-width="1.2"/></svg>
<div style="left:1259px;top:99px;width:22px;height:23px;background:#ffffff;border:1px solid #3a6ee8;box-sizing:border-box;border-radius:3px;"></div>
<svg style="left:1262px;top:102px;" width="17" height="17" viewBox="0 0 17 17"><path d="M1 1.5 h3.5 v3.5 h-3.5z M1 7 h3.5 v3.5 h-3.5z M1 12.5 h3.5 v3.5 h-3.5z" fill="#fff" stroke="#5a6ae0" stroke-width="1"/><defs><radialGradient id="st"><stop offset="0" stop-color="#fff6a0"/><stop offset="1" stop-color="#e0b000"/></radialGradient></defs><path d="M11 0.5 L12.6 4.5 L16.5 4.7 L13.5 7.3 L14.5 11.5 L11 9.2 L7.5 11.5 L8.5 7.3 L5.5 4.7 L9.4 4.5 Z" fill="url(#st)" stroke="#b08a10" stroke-width="0.5"/><path d="M12 10.5 V12.5 H8 M9.5 11 L7.8 12.5 L9.5 14" stroke="#111a55" stroke-width="1.2" fill="none"/></svg>
<div style="left:1284px;top:98px;width:1px;height:22px;background:repeating-linear-gradient(#9a9a9a 0 1px,transparent 1px 2px);"></div>
<svg style="left:1290px;top:100px;" width="20" height="20" viewBox="0 0 20 20"><path d="M5 15 Q1 12 2 8 Q3 5 6 4.5" stroke="#0a1050" stroke-width="2" fill="none"/><path d="M4.5 1.5 L9 5 L4.5 8 Z" fill="#0a1050"/><circle cx="12.5" cy="5.5" r="4.2" fill="#d8141a"/><path d="M10.3 3.3 L14.7 7.7 M14.7 3.3 L10.3 7.7 M12.5 2.7 V8.3 M9.7 5.5 H15.3" stroke="#fff" stroke-width="1"/></svg>
<svg style="left:1314px;top:100px;" width="20" height="20" viewBox="0 0 20 20"><path d="M6 2 Q2 3.5 2 8 Q2.5 11.5 5 13" stroke="#0a1050" stroke-width="2" fill="none"/><path d="M4 10.5 L8 13.8 L4.5 16.5 Z" fill="#0a1050"/><circle cx="13" cy="12.5" r="4.2" fill="#d8141a"/><path d="M10.8 10.3 L15.2 14.7 M15.2 10.3 L10.8 14.7 M13 9.7 V15.3 M10.2 12.5 H15.8" stroke="#fff" stroke-width="1"/></svg>
<svg style="left:1338px;top:100px;" width="18" height="20" viewBox="0 0 18 20"><rect x="7" y="2" width="8" height="12" fill="#707070"/><rect x="7.5" y="2.5" width="2.5" height="11" fill="#a8a8a8"/><rect x="8" y="10" width="7" height="4" fill="#f4f4f4"/><path d="M9 11 h1.5 v2 h-1.5z" fill="#222"/><path d="M12 11 V13" stroke="#222" stroke-width="0.9"/><path d="M5 15.5 Q1 13 2 9 Q3 7 5 6" stroke="#444" stroke-width="1.6" fill="none"/><path d="M4 4 L7.5 6.5 L4 9 Z" fill="#333"/></svg>
<svg style="left:1363px;top:100px;" width="18" height="20" viewBox="0 0 18 20"><rect x="7" y="3.5" width="8" height="12" fill="#707070"/><rect x="7.5" y="4" width="2.5" height="11" fill="#a8a8a8"/><rect x="8" y="11.5" width="7" height="4" fill="#f4f4f4"/><path d="M9 12.5 h1.5 v2 h-1.5z" fill="#222"/><path d="M12 12.5 V14.5" stroke="#222" stroke-width="0.9"/><path d="M5 2 Q1 3.5 1.5 7 Q2 9.5 4.5 10.5" stroke="#444" stroke-width="1.6" fill="none"/><path d="M3.5 8.5 L7 11 L3.5 13 Z" fill="#333"/></svg>
<svg style="left:1386px;top:100px;" width="18" height="20" viewBox="0 0 18 20"><path d="M5 2 H11 L13.5 4.5 H15 V6 H13.5 V9 L11 11.5 H5 Z" fill="#707070"/><path d="M2 4.5 H5 M2 8.5 H5" stroke="#707070" stroke-width="1.5"/><path d="M7.5 4 L10.5 6.8 L7.5 9.5 Z" fill="#f0f0f0"/><path d="M5.5 12 L8.5 15.5 L14 9.5" stroke="#707070" stroke-width="2" fill="none"/></svg>
<div style="left:1409px;top:98px;width:1px;height:22px;background:repeating-linear-gradient(#9a9a9a 0 1px,transparent 1px 2px);"></div>
<svg style="left:1415px;top:100px;" width="17" height="20" viewBox="0 0 17 20"><path d="M5 3 Q1 5 1 9 Q1.5 12 4 13.5" stroke="#0a1050" stroke-width="2" fill="none"/><path d="M3 11 L6.5 14 L3.5 16.5 Z" fill="#0a1050"/><path d="M7 8 H15 M7 10.5 H15" stroke="#909090" stroke-width="1.6"/><path d="M7 13 H15" stroke="#2a5ae0" stroke-width="1.6"/></svg>
<svg style="left:1441px;top:100px;" width="14" height="20" viewBox="0 0 14 20"><path d="M1.5 2 V8.5" stroke="#111" stroke-width="1.8"/><path d="M5 9 H11 M5 11.5 H11 M5 14 H11" stroke="#8a8a8a" stroke-width="1.7"/></svg>
<svg style="left:1464px;top:100px;" width="17" height="20" viewBox="0 0 17 20"><path d="M1 2 L8 8.5" stroke="#555" stroke-width="1.2"/><path d="M4 2.5 V6" stroke="#111" stroke-width="1.6"/><path d="M8 9 H14 M8 11.5 H14 M8 14 H14" stroke="#8a8a8a" stroke-width="1.7"/></svg>
<div style="left:1486px;top:98px;width:1px;height:22px;background:repeating-linear-gradient(#9a9a9a 0 1px,transparent 1px 2px);"></div>
<svg style="left:1493px;top:100px;" width="15" height="20" viewBox="0 0 15 20"><path d="M5 2 Q1 4 1 8 Q1.5 11 3.5 12.5" stroke="#0a1050" stroke-width="2" fill="none"/><path d="M2.5 10 L6 13 L3 15.5 Z" fill="#0a1050"/><path d="M8 3 H12 V15 L10 13 L8 15 Z" fill="#2a3ae8"/></svg>
<svg style="left:1517px;top:100px;" width="15" height="20" viewBox="0 0 15 20"><path d="M3 15.5 Q0 13 1 9 Q2 6.5 4 5.5" stroke="#0a1050" stroke-width="2" fill="none"/><path d="M2.5 3 L6 5.5 L3 8.5 Z" fill="#0a1050"/><path d="M8 1 H12 V13 L10 11 L8 13 Z" fill="#2a3ae8"/></svg>
<div style="left:1539px;top:98px;width:1px;height:22px;background:repeating-linear-gradient(#9a9a9a 0 1px,transparent 1px 2px);"></div>
<svg style="left:1546px;top:100px;" width="17" height="20" viewBox="0 0 17 20"><circle cx="5" cy="13" r="4.5" fill="#f07820"/><path d="M5 8.5 A4.5 4.5 0 0 0 5 17.5 Z" fill="#2a5ad8"/><circle cx="10" cy="5" r="3.2" fill="#fff" stroke="#222" stroke-width="1.4"/><path d="M12.2 7.2 L15.5 10.5" stroke="#3a4a8a" stroke-width="2"/></svg>
<div style="left:1567px;top:99px;width:22px;height:23px;background:#ffffff;border:1px solid #3a6ee8;box-sizing:border-box;border-radius:3px;"></div>
<svg style="left:1569px;top:101px;" width="18" height="18" viewBox="0 0 18 18"><path d="M2 2 H7 V5.5 H2 Z M9 2 H14 V5.5 H9 Z" stroke="#0a1050" stroke-width="1.4" fill="none" stroke-linejoin="round"/><path d="M7 3 H9 M14 3 L16 5" stroke="#0a1050" stroke-width="1.2"/><path d="M9.5 8.5 L15 11 L9.5 13.5 Z" fill="#2ab82a"/></svg>
<div style="left:1591px;top:98px;width:1px;height:22px;background:repeating-linear-gradient(#9a9a9a 0 1px,transparent 1px 2px);"></div>
<svg style="left:1599px;top:100px;" width="17" height="20" viewBox="0 0 17 20"><defs><linearGradient id="cyl2" x1="0" x2="1"><stop offset="0" stop-color="#a8a8a8"/><stop offset="0.5" stop-color="#dadada"/><stop offset="1" stop-color="#a0a0a0"/></linearGradient></defs><rect x="0" y="4" width="10" height="11" fill="url(#cyl2)"/><ellipse cx="5" cy="4" rx="5" ry="2" fill="#e0e0e0" stroke="#aaa" stroke-width="0.5"/><ellipse cx="5" cy="15" rx="5" ry="2" fill="#a0a0a0"/><rect x="10" y="12" width="5" height="5" fill="#8a8a8a"/><path d="M11 12 V10.5 Q12.5 9 14 10.5 V12" stroke="#8a8a8a" stroke-width="1" fill="none"/></svg>
<svg style="left:1846px;top:100px;" width="16" height="18" viewBox="0 0 16 18"><rect x="0.5" y="1.5" width="15" height="14" fill="#eef2ff" stroke="#6a7ad8"/><path d="M1 5 H15 M1 9 H15" stroke="#6a7ad8"/><circle cx="13" cy="9" r="2.5" fill="#1a2a6a"/><path d="M9 16 Q13 10 17 16" fill="#2a6ad8"/></svg>
<div style="left:900px;top:123px;width:962px;height:21px;background:#d9d9d9;"></div>
<div style="top:126.19px;font-size:13.3px;line-height:16px;font-weight:700;color:#000;white-space:pre;letter-spacing:0.15px;left:925.5px;">Régulation_Var_Pompe</div>
<div style="left:900px;top:144px;width:962px;height:1px;background:#8a8a8a;"></div>
<div style="left:900px;top:145px;width:962px;height:5px;background:#dadada;"></div>
<div style="left:900px;top:150px;width:962px;height:1px;background:#fafafa;"></div>
<div style="left:900px;top:151px;width:962px;height:1px;background:#9a9a9a;"></div>
<div style="left:1360px;top:144px;width:24px;height:7px;background:#cfcfcf;border:1px solid #9a9a9a;box-sizing:border-box;"></div>
<svg style="left:1365px;top:145px;" width="14" height="5" viewBox="0 0 14 5"><path d="M4 4 L7 1 L10 4 Z" fill="#111"/></svg>
<div style="left:1394px;top:144px;width:24px;height:7px;background:#cfcfcf;border:1px solid #9a9a9a;box-sizing:border-box;"></div>
<svg style="left:1399px;top:145px;" width="14" height="5" viewBox="0 0 14 5"><path d="M4 1 L7 4 L10 1 Z" fill="#111"/></svg>
<div style="left:900px;top:152px;width:962px;height:22px;background:#ffffff;"></div>
<div style="top:155.44px;font-size:12px;line-height:14px;font-weight:400;color:#000;white-space:pre;letter-spacing:0.1px;left:906px;">Aucune condition définie.</div>
<svg style="left:1807px;top:156px;" width="42" height="16" viewBox="0 0 42 16"><defs><linearGradient id="tg" x1="0" y1="0" x2="0" y2="1"><stop offset="0" stop-color="#1a9a92"/><stop offset="1" stop-color="#d4f2ee"/></linearGradient><linearGradient id="tl" x1="0" y1="0" x2="0" y2="1"><stop offset="0" stop-color="#c8ccf4"/><stop offset="1" stop-color="#f4f4ff"/></linearGradient></defs><rect x="1" y="0" width="4" height="12.5" fill="url(#tg)"/><rect x="1" y="12.5" width="4" height="1.6" fill="#14948c"/><rect x="7" y="0" width="4" height="12.5" fill="url(#tg)"/><rect x="7" y="12.5" width="4" height="1.6" fill="#14948c"/><rect x="13" y="0" width="4" height="12.5" fill="url(#tg)"/><rect x="13" y="12.5" width="4" height="1.6" fill="#14948c"/><rect x="19" y="0" width="4" height="12.5" fill="url(#tg)"/><rect x="19" y="12.5" width="4" height="1.6" fill="#14948c"/><rect x="25" y="0" width="4" height="12.5" fill="url(#tg)"/><rect x="25" y="12.5" width="4" height="1.6" fill="#14948c"/><rect x="31" y="0" width="4" height="12.5" fill="url(#tl)"/><rect x="31" y="12.5" width="4" height="1.6" fill="#3a3ad8"/><rect x="37" y="0" width="4" height="12.5" fill="url(#tg)"/><rect x="37" y="12.5" width="4" height="1.6" fill="#14948c"/></svg>
<div style="left:1857px;top:154px;width:6px;height:19px;background:#e4e4e4;border:1px solid #666;box-sizing:border-box;"></div>
<div style="left:1859px;top:156px;width:4px;height:2px;background:#0a1a5a;"></div>
<div style="left:900px;top:174px;width:962px;height:38px;background:#e8e8e8;"></div>
<div style="left:902px;top:176px;width:32px;height:32px;background:#ffffff;"></div>
<svg style="left:902px;top:176px;" width="32" height="32" viewBox="0 0 32 32"><path d="M5 15.5 H12 M20 15.5 H27" stroke="#111a44" stroke-width="1.8" fill="none"/><path d="M12 11.5 V19.5 M20 11.5 V19.5" stroke="#111a44" stroke-width="2.4" fill="none"/></svg>
<div style="left:936px;top:176px;width:32px;height:32px;background:#ffffff;"></div>
<svg style="left:936px;top:176px;" width="32" height="32" viewBox="0 0 32 32"><path d="M4 15.5 H11 M21 15.5 H29" stroke="#111a44" stroke-width="1.8" fill="none"/><path d="M11 11.5 V19.5 M21 11.5 V19.5" stroke="#111a44" stroke-width="2.4" fill="none"/><path d="M14.5 19 L17 12" stroke="#888" stroke-width="1.3"/></svg>
<div style="left:970px;top:176px;width:32px;height:32px;background:#ffffff;"></div>
<svg style="left:970px;top:176px;" width="32" height="32" viewBox="0 0 32 32"><path d="M2 15.5 H12 M18 15.5 H30" stroke="#111a44" stroke-width="1.8" fill="none"/><path d="M13 10.5 Q10.5 15.5 13 20.5 M17 10.5 Q19.5 15.5 17 20.5" stroke="#111a44" stroke-width="1.8" fill="none"/></svg>
<div style="left:1004px;top:176px;width:32px;height:32px;background:#ffffff;"></div>
<svg style="left:1004px;top:176px;" width="32" height="32" viewBox="0 0 32 32"><rect x="9.5" y="9.5" width="13" height="13" fill="none" stroke="#111a44" stroke-width="1.5"/><path d="M7.5 12 H9.5 M22.5 12 H24.5" stroke="#111a44" stroke-width="1.5"/><text x="16" y="19.5" font-size="10" font-family="Liberation Sans" text-anchor="middle" fill="#111a44">??</text></svg>
<div style="left:1038px;top:176px;width:32px;height:32px;background:#ffffff;"></div>
<svg style="left:1038px;top:176px;" width="32" height="32" viewBox="0 0 32 32"><path d="M7.5 12 V15.5 H19" stroke="#111a44" stroke-width="2.2" fill="none"/><path d="M18 11.5 L23 15.5 L18 19.5 Z" fill="#111a44"/></svg>
<div style="left:1072px;top:176px;width:32px;height:32px;background:#dcedf8;"></div>
<svg style="left:1072px;top:176px;" width="32" height="32" viewBox="0 0 32 32"><path d="M7 15.5 H18 V9" stroke="#4a5a7a" stroke-width="2" fill="none"/><path d="M14 10 L18 5.5 L22 10 Z" fill="#4a5a7a"/></svg>
<div style="left:900px;top:212px;width:960px;height:11px;background:#d9d9d9;"></div>
<div style="left:900px;top:212px;width:960px;height:11px;overflow:hidden;"><svg style="left:8px;top:0" width="6" height="4"><path d="M0 0.5 L5 0.5 L2.5 3 Z" fill="#000"/></svg><div style="left:39.4px;top:-7.6px;font-size:13.5px;line-height:16px;font-weight:700;white-space:pre;letter-spacing:0.1px;">Réseau 34 :</div><div style="left:124px;top:-4.6px;font-size:11px;line-height:13px;color:#999;white-space:pre;">.....</div></div>
<div style="left:900px;top:223px;width:960px;height:486px;background:#ffffff;"></div>
<div style="left:920px;top:228px;width:905px;height:471px;border:1px solid #c6c6e8;box-sizing:border-box;"></div>
<svg style="left:0;top:0" width="1862" height="823"><path d="M927 231 L927 695" stroke="#22ee22" stroke-width="2" fill="none"/><path d="M927 284 L976 284" stroke="#22ee22" stroke-width="2" fill="none"/><path d="M990 284 L1062 284" stroke="#22ee22" stroke-width="2" fill="none"/><path d="M976 276 L976 291" stroke="#22ee22" stroke-width="2" fill="none"/><path d="M990 276 L990 291" stroke="#22ee22" stroke-width="2" fill="none"/><path d="M1039 284 L1039 570" stroke="#22ee22" stroke-width="2" fill="none"/><path d="M1129 284 L1278 284" stroke="#22ee22" stroke-width="2" fill="none"/><path d="M1360 284 L1481 284" stroke="#22ee22" stroke-width="2" fill="none"/><path d="M1480 281 L1480 287" stroke="#22ee22" stroke-width="2" fill="none"/><path d="M1039 434 L1078 434" stroke="#22ee22" stroke-width="2" fill="none"/><path d="M1039 569 L1166 569" stroke="#22ee22" stroke-width="2" fill="none"/><path d="M1248 569 L1502 569" stroke="#22ee22" stroke-width="2" fill="none"/><path d="M1696 569 L1741 569" stroke="#22ee22" stroke-width="2" fill="none"/><path d="M1740 566 L1740 572" stroke="#22ee22" stroke-width="2" fill="none"/><path d="M1263 314 L1278 314" stroke="#000" stroke-width="2" fill="none"/><path d="M1360 359 L1375 359" stroke="#000" stroke-width="2" fill="none"/><path d="M1263 449 L1278 449" stroke="#000" stroke-width="2" fill="none"/><path d="M1360 509 L1375 509" stroke="#000" stroke-width="2" fill="none"/><path d="M1151 644 L1166 644" stroke="#000" stroke-width="2" fill="none"/><path d="M1151 659 L1166 659" stroke="#000" stroke-width="2" fill="none"/><path d="M1248 614 L1262 614" stroke="#000" stroke-width="2" fill="none"/><path d="M1487 614 L1502 614" stroke="#000" stroke-width="2" fill="none"/><path d="M1696 629 L1711 629" stroke="#000" stroke-width="2" fill="none"/></svg>
<div style="top:247.29px;font-size:11px;line-height:13px;font-weight:400;color:#1f9aa6;white-space:pre;letter-spacing:0.3px;left:682px;width:600px;text-align:center;">%M1.2</div>
<div style="top:262.29px;font-size:11px;line-height:13px;font-weight:400;color:#000;white-space:pre;letter-spacing:0.1px;left:682px;width:600px;text-align:center;">"AlwaysTRUE"</div>
<div style="left:1080px;top:240px;width:31px;height:14px;background:#d3d3d3;"></div>
<div style="top:241.99px;font-size:11px;line-height:13px;font-weight:400;color:#000;white-space:pre;letter-spacing:0.25px;left:795.5px;width:600px;text-align:center;">50.0</div>
<div style="top:254.99px;font-size:11px;line-height:13px;font-weight:400;color:#000;white-space:pre;letter-spacing:0.3px;left:794px;width:600px;text-align:center;">#Cons_31P01</div>
<div style="left:1062px;top:269px;width:67px;height:30px;background:#3a66d6;border:1px dotted #333;box-sizing:border-box;"></div>
<div style="left:1077px;top:270px;width:2px;height:28px;background:#fff;"></div>
<div style="left:1111px;top:270px;width:2px;height:28px;background:#fff;"></div>
<div style="left:1063px;top:283px;width:14px;height:2px;background:#fff;"></div>
<div style="left:1113px;top:283px;width:15px;height:2px;background:#fff;"></div>
<svg style="left:1122px;top:270px;" width="6" height="6" viewBox="0 0 6 6"><path d="M0 0 H6 V6 Z" fill="#f8a010"/></svg>
<svg style="left:1121px;top:291px;" width="7" height="7" viewBox="0 0 7 7"><path d="M7 0 V7 H0 Z" fill="#f8a010"/></svg>
<div style="top:271.34px;font-size:10px;line-height:12px;font-weight:400;color:#fff;white-space:pre;letter-spacing:0.25px;left:795px;width:600px;text-align:center;">&lt;</div>
<div style="top:283.82px;font-size:11.5px;line-height:14px;font-weight:400;color:#fff;white-space:pre;letter-spacing:0.3px;left:795px;width:600px;text-align:center;">Real</div>
<div style="top:299.09px;font-size:11px;line-height:13px;font-weight:400;color:#3a6ad8;white-space:pre;letter-spacing:0.3px;left:795px;width:600px;text-align:center;">65.0</div>
<div style="left:1278px;top:261px;width:82px;height:105px;background:#dcdce4;"></div>
<div style="left:1278px;top:261px;width:82px;height:105px;box-sizing:border-box;border:2px solid #22ee22;"></div>
<div style="left:1280px;top:263px;width:78px;height:13px;background:#c8c8d4;"></div>
<div style="top:264.49px;font-size:11px;line-height:13px;font-weight:400;color:#000;white-space:pre;letter-spacing:0.3px;left:1019px;width:600px;text-align:center;">MOVE</div>
<div style="top:277.49px;font-size:11px;line-height:13px;font-weight:400;color:#000;white-space:pre;letter-spacing:0.25px;left:1283px;">EN</div>
<div style="top:277.49px;font-size:11px;line-height:13px;font-weight:400;color:#a0a0a0;white-space:pre;letter-spacing:0.25px;left:755px;width:600px;text-align:right;">ENO</div>
<div style="left:1304px;top:283px;width:22px;height:1px;background:#888;"></div>
<div style="left:1281px;top:291px;width:76px;height:1px;background:#f4f4f8;"></div>
<div style="top:307.49px;font-size:11px;line-height:13px;font-weight:400;color:#000;white-space:pre;letter-spacing:0.25px;left:1283px;">IN</div>
<div style="top:352.49px;font-size:11px;line-height:13px;font-weight:400;color:#000;white-space:pre;letter-spacing:-0.2px;left:754px;width:600px;text-align:right;">OUT1</div>
<svg style="left:1311px;top:353.5px;" width="10" height="10" viewBox="0 0 10 10"><path d="M1.2 1.2 L8.8 8.8 M8.8 1.2 L1.2 8.8" stroke="#1a4aa8" stroke-width="1.5"/><path d="M2.6 2.6 L7.4 7.4 M7.4 2.6 L2.6 7.4" stroke="#f8f000" stroke-width="1.5"/><path d="M5 0.3 V9.7 M0.3 5 H9.7" stroke="#1a4aa8" stroke-width="2"/><path d="M5 1.5 V8.5 M1.5 5 H8.5" stroke="#f8f000" stroke-width="2"/><circle cx="5" cy="5" r="1.8" fill="#f8f000"/></svg>
<div style="left:1229px;top:292px;width:31px;height:14px;background:#d3d3d3;"></div>
<div style="top:293.99px;font-size:11px;line-height:13px;font-weight:400;color:#000;white-space:pre;letter-spacing:0.25px;left:658px;width:600px;text-align:right;">50.0</div>
<div style="top:307.49px;font-size:11px;line-height:13px;font-weight:400;color:#000;white-space:pre;letter-spacing:0.3px;left:658px;width:600px;text-align:right;">#Cons_31P01</div>
<div style="left:1378px;top:292px;width:31px;height:14px;background:#d3d3d3;"></div>
<div style="top:293.99px;font-size:11px;line-height:13px;font-weight:400;color:#000;white-space:pre;letter-spacing:0.25px;left:1378px;">50.0</div>
<div style="top:307.29px;font-size:11px;line-height:13px;font-weight:400;color:#000;white-space:pre;letter-spacing:0.35px;left:1378px;">"DB_Process_</div>
<div style="top:321.29px;font-size:11px;line-height:13px;font-weight:400;color:#000;white-space:pre;letter-spacing:0.35px;left:1378px;">Cs".Ppe.</div>
<div style="top:335.29px;font-size:11px;line-height:13px;font-weight:400;color:#000;white-space:pre;letter-spacing:0.35px;left:1378px;">"31P01".Sortie_</div>
<div style="top:349.29px;font-size:11px;line-height:13px;font-weight:400;color:#000;white-space:pre;letter-spacing:0.35px;left:1378px;">PID</div>
<div style="left:1080px;top:390px;width:31px;height:14px;background:#d3d3d3;"></div>
<div style="top:391.99px;font-size:11px;line-height:13px;font-weight:400;color:#000;white-space:pre;letter-spacing:0.25px;left:795.5px;width:600px;text-align:center;">50.0</div>
<div style="top:405.49px;font-size:11px;line-height:13px;font-weight:400;color:#000;white-space:pre;letter-spacing:0.3px;left:794px;width:600px;text-align:center;">#Cons_31P01</div>
<svg style="left:0;top:0" width="1862" height="823"><path d="M1078 419 L1078 449" stroke="#1414f0" stroke-width="2" stroke-dasharray="4 2" fill="none"/><path d="M1112 419 L1112 449" stroke="#1414f0" stroke-width="2" stroke-dasharray="4 2" fill="none"/><path d="M1113 434 L1278 434" stroke="#1414f0" stroke-width="2" stroke-dasharray="5 3" fill="none"/><path d="M1360 434 L1406 434" stroke="#1414f0" stroke-width="2" stroke-dasharray="5 3" fill="none"/><path d="M1405 431 L1405 437" stroke="#1414f0" stroke-width="2" fill="none"/><path d="M1263 449 L1278 449" stroke="#000" stroke-width="2" fill="none"/><path d="M1360 509 L1375 509" stroke="#000" stroke-width="2" fill="none"/></svg>
<div style="top:421.34px;font-size:10px;line-height:12px;font-weight:400;color:#1414f0;white-space:pre;letter-spacing:0.25px;left:795px;width:600px;text-align:center;">&gt;=</div>
<div style="top:434.52px;font-size:11.5px;line-height:14px;font-weight:400;color:#1414f0;white-space:pre;letter-spacing:0.3px;left:795px;width:600px;text-align:center;">Real</div>
<div style="top:448.99px;font-size:11px;line-height:13px;font-weight:400;color:#3a6ad8;white-space:pre;letter-spacing:0.3px;left:795px;width:600px;text-align:center;">65.0</div>
<div style="left:1278px;top:411px;width:82px;height:104px;background:#dcdce4;"></div>
<div style="left:1280px;top:413px;width:78px;height:13px;background:#c8c8d4;"></div>
<svg style="left:1277px;top:410px" width="84" height="106"><rect x="2" y="2" width="80" height="102" fill="none" stroke="#1414f0" stroke-width="2.2" stroke-dasharray="5 3"/></svg>
<div style="top:414.49px;font-size:11px;line-height:13px;font-weight:400;color:#000;white-space:pre;letter-spacing:0.3px;left:1019px;width:600px;text-align:center;">MOVE</div>
<div style="top:427.49px;font-size:11px;line-height:13px;font-weight:400;color:#000;white-space:pre;letter-spacing:0.25px;left:1283px;">EN</div>
<div style="top:427.49px;font-size:11px;line-height:13px;font-weight:400;color:#a0a0a0;white-space:pre;letter-spacing:0.25px;left:755px;width:600px;text-align:right;">ENO</div>
<div style="left:1304px;top:433px;width:22px;height:1px;background:#888;"></div>
<div style="left:1281px;top:441px;width:76px;height:1px;background:#f4f4f8;"></div>
<div style="top:442.49px;font-size:11px;line-height:13px;font-weight:400;color:#000;white-space:pre;letter-spacing:0.25px;left:1283px;">IN</div>
<div style="top:502.49px;font-size:11px;line-height:13px;font-weight:400;color:#000;white-space:pre;letter-spacing:-0.2px;left:754px;width:600px;text-align:right;">OUT1</div>
<svg style="left:1311px;top:503.5px;" width="10" height="10" viewBox="0 0 10 10"><path d="M1.2 1.2 L8.8 8.8 M8.8 1.2 L1.2 8.8" stroke="#1a4aa8" stroke-width="1.5"/><path d="M2.6 2.6 L7.4 7.4 M7.4 2.6 L2.6 7.4" stroke="#f8f000" stroke-width="1.5"/><path d="M5 0.3 V9.7 M0.3 5 H9.7" stroke="#1a4aa8" stroke-width="2"/><path d="M5 1.5 V8.5 M1.5 5 H8.5" stroke="#f8f000" stroke-width="2"/><circle cx="5" cy="5" r="1.8" fill="#f8f000"/></svg>
<div style="top:442.49px;font-size:11px;line-height:13px;font-weight:400;color:#3a6ad8;white-space:pre;letter-spacing:0.3px;left:659px;width:600px;text-align:right;">65.0</div>
<div style="left:1378px;top:442px;width:31px;height:14px;background:#d3d3d3;"></div>
<div style="top:443.99px;font-size:11px;line-height:13px;font-weight:400;color:#000;white-space:pre;letter-spacing:0.25px;left:1378px;">50.0</div>
<div style="top:457.29px;font-size:11px;line-height:13px;font-weight:400;color:#000;white-space:pre;letter-spacing:0.35px;left:1378px;">"DB_Process_</div>
<div style="top:471.29px;font-size:11px;line-height:13px;font-weight:400;color:#000;white-space:pre;letter-spacing:0.35px;left:1378px;">Cs".Ppe.</div>
<div style="top:485.29px;font-size:11px;line-height:13px;font-weight:400;color:#000;white-space:pre;letter-spacing:0.35px;left:1378px;">"31P01".Sortie_</div>
<div style="top:499.29px;font-size:11px;line-height:13px;font-weight:400;color:#000;white-space:pre;letter-spacing:0.35px;left:1378px;">PID</div>
<div style="left:1166px;top:531px;width:82px;height:135px;background:#dcdce4;"></div>
<div style="left:1166px;top:531px;width:82px;height:135px;box-sizing:border-box;border:2px solid #22ee22;"></div>
<div style="left:1168px;top:533px;width:78px;height:28px;background:#c8c8d4;"></div>
<div style="left:1175px;top:546px;width:66px;height:15px;background:#d4d4de;border:1px solid #c0c0cc;box-sizing:border-box;"></div>
<div style="top:534.49px;font-size:11px;line-height:13px;font-weight:400;color:#000;white-space:pre;letter-spacing:0.3px;left:907px;width:600px;text-align:center;">MUL</div>
<div style="top:547.49px;font-size:11px;line-height:13px;font-weight:400;color:#000;white-space:pre;letter-spacing:0.2px;left:907px;width:600px;text-align:center;">Auto (Real)</div>
<div style="top:562.49px;font-size:11px;line-height:13px;font-weight:400;color:#000;white-space:pre;letter-spacing:0.25px;left:1170px;">EN</div>
<div style="top:562.49px;font-size:11px;line-height:13px;font-weight:400;color:#a0a0a0;white-space:pre;letter-spacing:0.25px;left:644px;width:600px;text-align:right;">ENO</div>
<div style="left:1192px;top:568px;width:22px;height:1px;background:#888;"></div>
<div style="left:1169px;top:576px;width:76px;height:1px;background:#f4f4f8;"></div>
<div style="top:607.49px;font-size:11px;line-height:13px;font-weight:400;color:#000;white-space:pre;letter-spacing:0.3px;left:644px;width:600px;text-align:right;">OUT</div>
<div style="top:637.49px;font-size:11px;line-height:13px;font-weight:400;color:#000;white-space:pre;letter-spacing:0.3px;left:1170px;">IN1</div>
<div style="left:1169px;top:651px;width:40px;height:1px;background:#f0f0f4;"></div>
<div style="top:652.49px;font-size:11px;line-height:13px;font-weight:400;color:#000;white-space:pre;letter-spacing:0.3px;left:1170px;">IN2</div>
<svg style="left:1194px;top:653px;" width="10" height="10" viewBox="0 0 10 10"><path d="M1.2 1.2 L8.8 8.8 M8.8 1.2 L1.2 8.8" stroke="#1a4aa8" stroke-width="1.5"/><path d="M2.6 2.6 L7.4 7.4 M7.4 2.6 L2.6 7.4" stroke="#f8f000" stroke-width="1.5"/><path d="M5 0.3 V9.7 M0.3 5 H9.7" stroke="#1a4aa8" stroke-width="2"/><path d="M5 1.5 V8.5 M1.5 5 H8.5" stroke="#f8f000" stroke-width="2"/><circle cx="5" cy="5" r="1.8" fill="#f8f000"/></svg>
<div style="left:1117px;top:577px;width:31px;height:14px;background:#d3d3d3;"></div>
<div style="top:578.99px;font-size:11px;line-height:13px;font-weight:400;color:#000;white-space:pre;letter-spacing:0.25px;left:546px;width:600px;text-align:right;">50.0</div>
<div style="top:592.09px;font-size:11px;line-height:13px;font-weight:400;color:#000;white-space:pre;letter-spacing:0.35px;left:548px;width:600px;text-align:right;">"DB_Process_</div>
<div style="top:606.09px;font-size:11px;line-height:13px;font-weight:400;color:#000;white-space:pre;letter-spacing:0.35px;left:548px;width:600px;text-align:right;">Cs".Ppe.</div>
<div style="top:620.09px;font-size:11px;line-height:13px;font-weight:400;color:#000;white-space:pre;letter-spacing:0.35px;left:548px;width:600px;text-align:right;">"31P01".Sortie_</div>
<div style="top:634.09px;font-size:11px;line-height:13px;font-weight:400;color:#000;white-space:pre;letter-spacing:0.35px;left:548px;width:600px;text-align:right;">PID</div>
<div style="top:651.99px;font-size:11px;line-height:13px;font-weight:400;color:#3a6ad8;white-space:pre;letter-spacing:0.4px;left:548px;width:600px;text-align:right;">327.68</div>
<div style="left:1265px;top:577px;width:48px;height:14px;background:#d3d3d3;"></div>
<div style="top:578.99px;font-size:11px;line-height:13px;font-weight:400;color:#000;white-space:pre;letter-spacing:0.3px;left:1266px;">16384.0</div>
<div style="top:592.09px;font-size:11px;line-height:13px;font-weight:400;color:#000;white-space:pre;letter-spacing:0.3px;left:1266px;">#Cons_31P01_</div>
<div style="top:606.09px;font-size:11px;line-height:13px;font-weight:400;color:#000;white-space:pre;letter-spacing:0.3px;left:1266px;">Real</div>
<div style="left:1502px;top:531px;width:194px;height:105px;background:#dcdce4;"></div>
<div style="left:1502px;top:531px;width:194px;height:105px;box-sizing:border-box;border:2px solid #22ee22;"></div>
<div style="left:1504px;top:533px;width:190px;height:28px;background:#c8c8d4;"></div>
<div style="top:533.99px;font-size:11px;line-height:13px;font-weight:400;color:#000;white-space:pre;letter-spacing:0.3px;left:1299px;width:600px;text-align:center;">CONV</div>
<div style="left:1560px;top:546px;width:30px;height:15px;background:#d4d4de;"></div>
<div style="left:1592px;top:546px;width:15px;height:15px;background:#d4d4de;"></div>
<div style="left:1609px;top:546px;width:21px;height:15px;background:#d4d4de;"></div>
<div style="top:547.49px;font-size:11px;line-height:13px;font-weight:400;color:#000;white-space:pre;letter-spacing:0.3px;left:1275px;width:600px;text-align:center;">Real</div>
<div style="top:547.49px;font-size:11px;line-height:13px;font-weight:400;color:#000;white-space:pre;letter-spacing:0.25px;left:1299.5px;width:600px;text-align:center;">to</div>
<div style="top:547.49px;font-size:11px;line-height:13px;font-weight:400;color:#000;white-space:pre;letter-spacing:0.3px;left:1319.5px;width:600px;text-align:center;">Int</div>
<div style="top:562.49px;font-size:11px;line-height:13px;font-weight:400;color:#000;white-space:pre;letter-spacing:0.25px;left:1506px;">EN</div>
<div style="top:562.49px;font-size:11px;line-height:13px;font-weight:400;color:#a0a0a0;white-space:pre;letter-spacing:0.25px;left:1092px;width:600px;text-align:right;">ENO</div>
<div style="left:1528px;top:568px;width:134px;height:1px;background:#888;"></div>
<div style="left:1505px;top:576px;width:186px;height:1px;background:#f4f4f8;"></div>
<div style="top:607.49px;font-size:11px;line-height:13px;font-weight:400;color:#000;white-space:pre;letter-spacing:0.25px;left:1506px;">IN</div>
<div style="top:622.49px;font-size:11px;line-height:13px;font-weight:400;color:#000;white-space:pre;letter-spacing:0.3px;left:1092px;width:600px;text-align:right;">OUT</div>
<div style="left:1432px;top:577px;width:52px;height:14px;background:#d3d3d3;"></div>
<div style="top:578.99px;font-size:11px;line-height:13px;font-weight:400;color:#000;white-space:pre;letter-spacing:0.3px;left:882px;width:600px;text-align:right;">16384.0</div>
<div style="top:591.99px;font-size:11px;line-height:13px;font-weight:400;color:#000;white-space:pre;letter-spacing:0.3px;left:884px;width:600px;text-align:right;">#Cons_31P01_</div>
<div style="top:606.09px;font-size:11px;line-height:13px;font-weight:400;color:#000;white-space:pre;letter-spacing:0.3px;left:884px;width:600px;text-align:right;">Real</div>
<div style="left:1714px;top:577px;width:42px;height:14px;background:#d3d3d3;"></div>
<div style="top:578.99px;font-size:11px;line-height:13px;font-weight:400;color:#000;white-space:pre;letter-spacing:0.3px;left:1714px;">16384</div>
<div style="top:592.89px;font-size:11px;line-height:13px;font-weight:400;color:#1f9aa6;white-space:pre;letter-spacing:0.4px;left:1714px;">%QW798</div>
<div style="top:607.19px;font-size:11px;line-height:13px;font-weight:400;color:#000;white-space:pre;letter-spacing:0.35px;left:1714px;">"Var_31P01_</div>
<div style="top:621.49px;font-size:11px;line-height:13px;font-weight:400;color:#000;white-space:pre;letter-spacing:0.3px;left:1714px;">Mot_Consigne"</div>
<div style="left:900px;top:706px;width:960px;height:93px;background:#ffffff;"></div>
<div style="left:900px;top:709px;width:960px;height:21px;background:#d9d9d9;overflow:hidden;"><svg style="left:7px;top:5px" width="7" height="11"><path d="M0.5 0.5 L6 5.5 L0.5 10.5 Z" fill="#000"/></svg><div style="left:39.4px;top:2.912500000000001px;font-size:13.5px;line-height:16px;font-weight:700;white-space:pre;letter-spacing:0.1px;">Réseau 35 :</div><div style="left:124.6px;top:4.252500000000001px;font-size:11.5px;line-height:14px;white-space:pre;letter-spacing:-0.1px;">"DB_PID_VAR_31P02"</div></div>
<div style="left:900px;top:735px;width:960px;height:20px;background:#d9d9d9;overflow:hidden;"><svg style="left:7px;top:5px" width="7" height="11"><path d="M0.5 0.5 L6 5.5 L0.5 10.5 Z" fill="#000"/></svg><div style="left:39.4px;top:2.912500000000001px;font-size:13.5px;line-height:16px;font-weight:700;white-space:pre;letter-spacing:0.1px;">Réseau 36 :</div><div style="left:124px;top:5px;font-size:11px;line-height:13px;color:#999;white-space:pre;">.....</div></div>
<div style="left:900px;top:761px;width:960px;height:21px;background:#d9d9d9;overflow:hidden;"><svg style="left:7px;top:5px" width="7" height="11"><path d="M0.5 0.5 L6 5.5 L0.5 10.5 Z" fill="#000"/></svg><div style="left:39.4px;top:2.912500000000001px;font-size:13.5px;line-height:16px;font-weight:700;white-space:pre;letter-spacing:0.1px;">Réseau 37 :</div><div style="left:124.6px;top:4.252500000000001px;font-size:11.5px;line-height:14px;white-space:pre;letter-spacing:-0.1px;">"DB_PID_VAR_31P03"</div></div>
<div style="left:900px;top:787px;width:960px;height:12px;background:#d9d9d9;overflow:hidden;"><svg style="left:7px;top:6px" width="7" height="11"><path d="M0.5 0.5 L6 5.5 L0.5 10.5 Z" fill="#000"/></svg><div style="left:39.4px;top:2.912500000000001px;font-size:13.5px;line-height:16px;font-weight:700;white-space:pre;letter-spacing:0.1px;">Réseau 38 :</div><div style="left:124px;top:5px;font-size:11px;line-height:13px;color:#999;white-space:pre;">.....</div></div>
<div style="left:900px;top:799px;width:962px;height:18px;background:#e9e9e9;"></div>
<div style="left:1602px;top:800px;width:155px;height:17px;background:#fff;border:1px solid #8c8c8c;box-sizing:border-box;border-radius:1px;"></div>
<div class="btn" style="left:1741px;top:800px;width:16px;height:17px;border-color:#9a9a9a;"></div>
<svg style="left:1744px;top:805px;" width="10" height="6" viewBox="0 0 10 6"><path d="M1 1 L9 1 L5 5 Z" fill="#000"/></svg>
<div style="top:802.14px;font-size:12px;line-height:14px;font-weight:400;color:#000;white-space:pre;left:1607.5px;">100%</div>
<div style="left:1776px;top:807px;width:66px;height:1px;background:#666;"></div>
<div style="left:1776px;top:812px;width:67px;height:3px;background:repeating-linear-gradient(90deg,#333 0 1px,transparent 1px 4.7px);"></div>
<svg style="left:1795px;top:802px;" width="9" height="12" viewBox="0 0 9 12"><path d="M0.5 0.5 H8.5 V7 L4.5 11 L0.5 7 Z" fill="#e8e8e8" stroke="#777"/></svg>
<div style="left:1860px;top:212px;width:2px;height:587px;background:#f8f8f8;"></div>
<div style="left:1860px;top:212px;width:1px;height:587px;background:#6a6a6a;"></div>
<div style="left:0px;top:817px;width:1862px;height:2px;background:#1a2133;"></div>
<div style="left:0px;top:819px;width:1862px;height:4px;background:#c2c2c2;"></div>
<div style="top:787.44px;font-size:19.8px;line-height:24px;font-weight:400;color:rgba(140,140,140,0.5);white-space:pre;left:1508px;">Activer Windows</div>
<div style="top:818.30px;font-size:13px;line-height:16px;font-weight:400;color:rgba(140,140,140,0.5);white-space:pre;left:1508px;">Accédez aux paramètres pour activer Windows.</div>
</body></html>
